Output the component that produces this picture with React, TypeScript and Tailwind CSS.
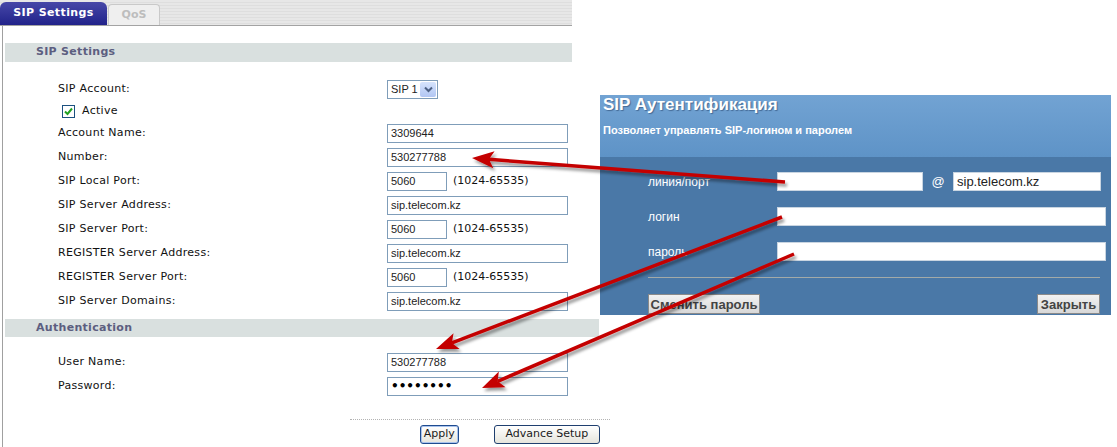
import React from "react";

type Pt = [number, number];

// red annotation arrows drawn over the screenshot
const arrows: { from: Pt; to: Pt }[] = [
  { from: [785, 182], to: [472, 158] },
  { from: [782, 217], to: [436, 349] },
  { from: [794, 254], to: [482, 388] },
];

function arrowShapes(from: Pt, to: Pt) {
  const dx = to[0] - from[0];
  const dy = to[1] - from[1];
  const len = Math.sqrt(dx * dx + dy * dy);
  const ux = dx / len;
  const uy = dy / len;
  const nx = -uy;
  const ny = ux;
  const L = 22;
  const W = 8.5;
  const bx = to[0] - ux * L;
  const by = to[1] - uy * L;
  const notchX = bx + ux * 5;
  const notchY = by + uy * 5;
  const head = [
    `${to[0]},${to[1]}`,
    `${bx + nx * W},${by + ny * W}`,
    `${notchX},${notchY}`,
    `${bx - nx * W},${by - ny * W}`,
  ].join(" ");
  return { lineEnd: [notchX, notchY] as Pt, head };
}

const labelRows = [
  { label: "Account Name:", value: "3309644" },
  { label: "Number:", value: "530277788" },
  { label: "SIP Local Port:", value: "5060", port: true },
  { label: "SIP Server Address:", value: "sip.telecom.kz" },
  { label: "SIP Server Port:", value: "5060", port: true },
  { label: "REGISTER Server Address:", value: "sip.telecom.kz" },
  { label: "REGISTER Server Port:", value: "5060", port: true },
  { label: "SIP Server Domains:", value: "sip.telecom.kz" },
];

function TextBox({ value, small }: { value: string; small?: boolean }) {
  return (
    <div
      className={`${
        small ? "w-[60px]" : "w-[181px]"
      } h-[19px] border border-[#7f9db9] bg-white flex items-center pl-[3px] font-['Liberation_Sans',sans-serif] text-[11px] text-[#222]`}
    >
      {value}
    </div>
  );
}

function Row({ label, children, h = "h-[24px]" }: { label: string; children: React.ReactNode; h?: string }) {
  return (
    <div className={`flex items-center ${h}`}>
      <div className="w-[329px] text-[11px] tracking-[0.3px] text-[#111]">{label}</div>
      {children}
    </div>
  );
}

function PanelInput({ value, w }: { value?: string; w: string }) {
  return (
    <div
      className={`${w} h-[19px] bg-white border border-[#c9d5e1] flex items-center pl-[3px] font-['Liberation_Sans',sans-serif] text-[13px] text-[#222]`}
    >
      {value}
    </div>
  );
}

export default function App() {
  return (
    <div className="relative w-[1117px] h-[447px] bg-white overflow-hidden flex font-['DejaVu_Sans',sans-serif]">
      {/* left: router settings page */}
      <div className="w-[600px] shrink-0">
        <div className="w-[572px] h-[26px] flex items-end border-b border-[#a3a3a3] bg-[repeating-linear-gradient(to_bottom,#e7e7e7_0px,#e7e7e7_2px,#dedede_2px,#dedede_3px)]">
          <div className="w-[107px] h-[23px] rounded-t-[6px] bg-gradient-to-b from-[#4747a8] to-[#22228a] flex items-center justify-center text-white font-bold text-[11px] tracking-[0.4px]">
            SIP Settings
          </div>
          <div className="ml-[1px] w-[52px] h-[21px] rounded-t-[4px] border border-b-0 border-[#c9c9c9] bg-[#efefef] flex items-center justify-center text-[#bdbdbd] font-bold text-[11px]">
            QoS
          </div>
        </div>

        <div className="ml-[2px] h-[421px] border-l border-[#a0a0a0] pt-[17px]">
          <div className="ml-[2px] w-[567px] h-[19px] bg-[#d9e0df] pl-[31px] flex items-center text-[11px] font-bold tracking-[0.3px] text-[#5c5e80]">
            SIP Settings
          </div>

          <div className="mt-[14px] pl-[55px]">
            <Row label="SIP Account:" h="h-[26px]">
              <div className="w-[51px] h-[19px] border border-[#7f9db9] bg-white flex items-center justify-between pl-[3px] pr-[1px] font-['Liberation_Sans',sans-serif] text-[11px] text-[#222]">
                SIP 1
                <div className="w-[16px] h-[15px] rounded-[2px] bg-gradient-to-b from-[#d6e3fc] to-[#b1c6f3] flex items-center justify-center">
                  <svg width="9" height="7" viewBox="0 0 9 7">
                    <path d="M1 1.5 L4.5 5 L8 1.5" stroke="#4d6185" strokeWidth="2" fill="none" />
                  </svg>
                </div>
              </div>
            </Row>
            <div className="h-[19px] flex items-center pl-[4px]">
              <div className="w-[13px] h-[13px] border border-[#1c5180] bg-white flex items-center justify-center">
                <svg width="11" height="11" viewBox="0 0 11 11">
                  <path d="M2 5.5 L4.5 8 L9 2.5" stroke="#21a121" strokeWidth="2" fill="none" />
                </svg>
              </div>
              <span className="ml-[7px] text-[11px] tracking-[0.3px] text-[#111]">Active</span>
            </div>
            {labelRows.map((r) => (
              <Row key={r.label} label={r.label}>
                <TextBox value={r.value} small={r.port} />
                {r.port && (
                  <span className="ml-[6px] text-[11px] text-[#111]">(1024-65535)</span>
                )}
              </Row>
            ))}
          </div>

          <div className="mt-[6px] ml-[2px] w-[594px] h-[18px] bg-[#d9e0df] pl-[31px] flex items-center text-[11px] font-bold tracking-[0.3px] text-[#5c5e80]">
            Authentication
          </div>

          <div className="mt-[13px] pl-[55px]">
            <Row label="User Name:">
              <TextBox value="530277788" />
            </Row>
            <Row label="Password:">
              <div className="w-[181px] h-[19px] border border-[#7f9db9] bg-white flex items-center pl-[3px] text-[12px] font-bold text-black">
                ••••••••
              </div>
            </Row>
          </div>

          <div className="mt-[21px] ml-[347px] w-[260px] border-t border-dotted border-[#b3b3b3]" />

          <div className="mt-[5px] ml-[417px] flex gap-[35px]">
            <button className="w-[40px] h-[19px] rounded-[3px] border border-[#1f4b8f] shadow-[inset_0_0_0_1px_#a9c3ec] bg-gradient-to-b from-white to-[#e6e5dc] text-[11px] text-[#1a1a1a]">
              Apply
            </button>
            <button className="w-[110px] h-[19px] rounded-[3px] border border-[#1f3f6f] bg-gradient-to-b from-white to-[#e6e5dc] text-[11px] text-[#1a1a1a]">
              Advance Setup
            </button>
          </div>
        </div>
      </div>

      {/* right: pasted dialog from the provider portal */}
      <div className="mt-[95px] w-[511px] h-[220px] flex flex-col font-['Liberation_Sans',sans-serif] text-white">
        <div className="h-[62px] bg-gradient-to-b from-[#72a3d3] to-[#5e93c7] px-[3px]">
          <div className="text-[17px] leading-[20px] font-bold [text-shadow:1px_1px_1px_rgba(40,70,110,0.6)]">
            SIP Аутентификация
          </div>
          <div className="mt-[8px] text-[11px] leading-[14px] font-bold">
            Позволяет управлять SIP-логином и паролем
          </div>
        </div>
        <div className="flex-1 bg-[#4a78a7] pl-[48px] pt-[15px]">
          <div className="flex items-center h-[19px]">
            <div className="w-[129px] text-[12px]">линия/порт</div>
            <PanelInput w="w-[146px]" />
            <span className="w-[30px] text-center text-[13px]">@</span>
            <PanelInput w="w-[148px]" value="sip.telecom.kz" />
          </div>
          <div className="mt-[16px] flex items-center h-[19px]">
            <div className="w-[129px] text-[12px]">логин</div>
            <PanelInput w="w-[329px]" />
          </div>
          <div className="mt-[16px] flex items-center h-[19px]">
            <div className="w-[129px] text-[12px]">пароль</div>
            <PanelInput w="w-[329px]" />
          </div>
          <div className="mt-[16px] w-[452px] h-px bg-[#a3aaa8]" />
          <div className="mt-[16px] w-[452px] flex justify-between">
            <button className="w-[112px] h-[20px] border border-[#8a8a8a] bg-gradient-to-b from-[#f2f2f2] to-[#d8d8d8] text-[13px] font-bold text-[#444]">
              Сменить пароль
            </button>
            <button className="w-[63px] h-[20px] border border-[#8a8a8a] bg-gradient-to-b from-[#f2f2f2] to-[#d8d8d8] text-[13px] font-bold text-[#444]">
              Закрыть
            </button>
          </div>
        </div>
      </div>

      <svg className="absolute inset-0 pointer-events-none" width="1117" height="447">
        <defs>
          <filter id="arrowShadow" x="-10%" y="-10%" width="130%" height="140%">
            <feDropShadow dx="2" dy="3" stdDeviation="1.6" floodColor="#000" floodOpacity="0.4" />
          </filter>
        </defs>
        <g filter="url(#arrowShadow)">
          {arrows.map((a, i) => {
            const s = arrowShapes(a.from, a.to);
            return (
              <g key={i}>
                <line
                  x1={a.from[0]}
                  y1={a.from[1]}
                  x2={s.lineEnd[0]}
                  y2={s.lineEnd[1]}
                  stroke="#c40000"
                  strokeWidth="3.5"
                />
                <polygon points={s.head} fill="#c40000" />
              </g>
            );
          })}
        </g>
      </svg>
    </div>
  );
}
